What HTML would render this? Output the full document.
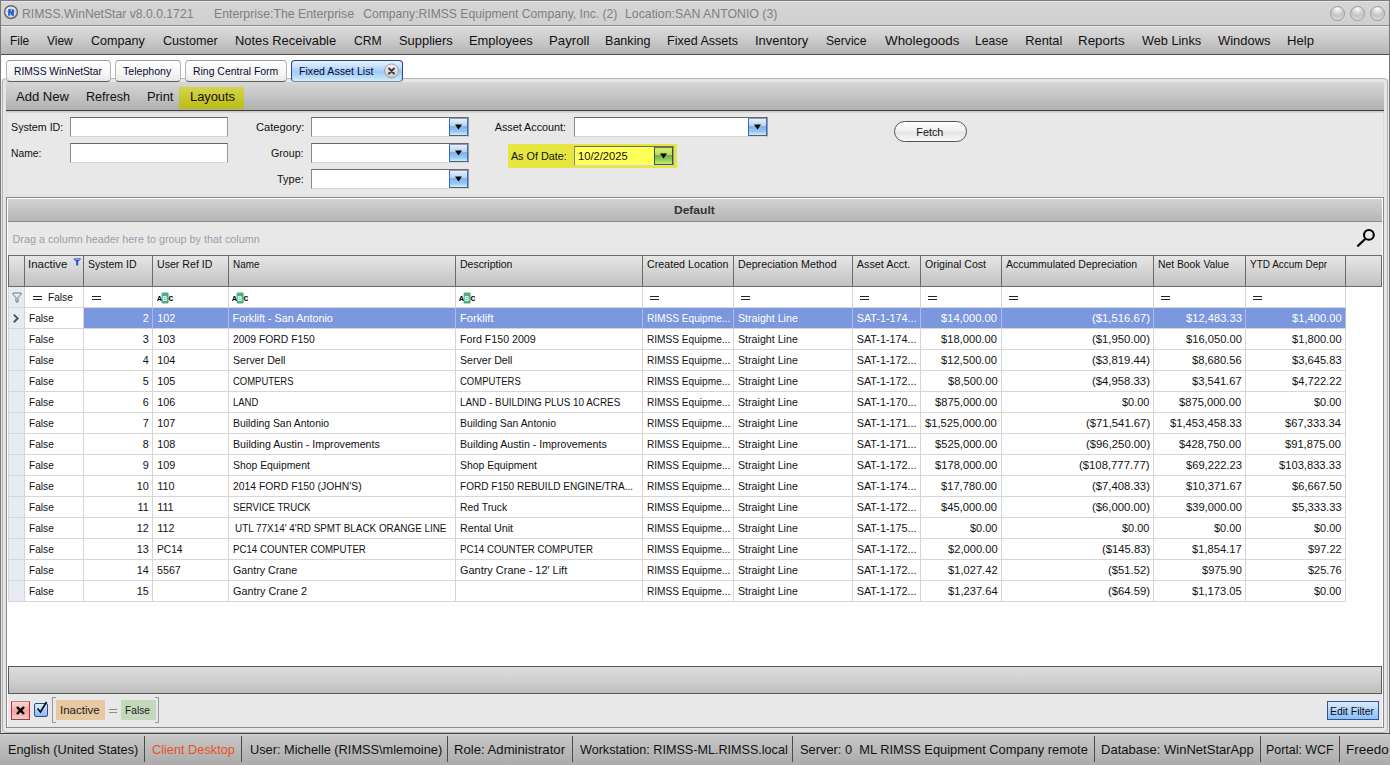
<!DOCTYPE html>
<html><head><meta charset="utf-8"><style>
html,body{margin:0;padding:0;}
body{width:1390px;height:765px;position:relative;overflow:hidden;background:#e6e6e6;font-family:"Liberation Sans", sans-serif;}
</style></head><body>
<div style="position:absolute;left:0px;top:0px;width:1390px;height:26px;background:linear-gradient(#d6d6d6,#cfcfcf);"></div>
<div style="position:absolute;left:0px;top:0px;width:1390px;height:1px;background:#7c7c7c;"></div>
<div style="position:absolute;left:1px;top:1px;width:1388px;height:1px;background:#e6e6e6;"></div>
<div style="position:absolute;left:0px;top:25px;width:1390px;height:1px;background:#8a8a8a;"></div>
<svg style="position:absolute;left:3px;top:4px" width="16" height="16" viewBox="0 0 16 16"><defs><radialGradient id="ig" cx="0.4" cy="0.35" r="0.7"><stop offset="0" stop-color="#ffffff"/><stop offset="0.7" stop-color="#e0e0e0"/><stop offset="1" stop-color="#b0b0b0"/></radialGradient></defs><circle cx="8" cy="8.1" r="6.4" fill="url(#ig)" stroke="#686868" stroke-width="1.5"/><path d="M8 2.5 L9.5 6.5 L13.5 6.8 L10.3 9.3 L11.5 13.3 L8 11 L4.5 13.3 L5.7 9.3 L2.5 6.8 L6.5 6.5 Z" fill="#8a8a8a" opacity="0.55"/><path d="M6.1 11.6 V5.2 L9.9 11.6 V5.2" stroke="#1f5fe8" stroke-width="1.9" fill="none" stroke-linejoin="bevel"/></svg>
<div class="t" style="position:absolute;top:8.00px;left:22.00px;transform-origin:0 0;font-size:12.15px;line-height:12.15px;color:#7f7f7f;white-space:nowrap;transform:scaleX(1.0043);">RIMSS.WinNetStar v8.0.0.1721</div>
<div class="t" style="position:absolute;top:8.00px;left:214.29px;transform-origin:0 0;font-size:12.15px;line-height:12.15px;color:#7f7f7f;white-space:nowrap;transform:scaleX(1.0118);">Enterprise:The Enterprise</div>
<div class="t" style="position:absolute;top:8.00px;left:363.20px;transform-origin:0 0;font-size:12.15px;line-height:12.15px;color:#7f7f7f;white-space:nowrap;">Company:RIMSS Equipment Company, Inc. (2)</div>
<div class="t" style="position:absolute;top:8.00px;left:624.99px;transform-origin:0 0;font-size:12.15px;line-height:12.15px;color:#7f7f7f;white-space:nowrap;transform:scaleX(1.0142);">Location:SAN ANTONIO (3)</div>
<div style="position:absolute;left:1330px;top:6px;width:13px;height:13px;border-radius:50%;border:1px solid #9a9a9a;background:radial-gradient(circle at 50% 15%,#ffffff 0,#e0e0e0 25%,#c4c4c4 55%,#e8e8e8 100%);box-sizing:content-box"></div>
<div style="position:absolute;left:1350px;top:6px;width:13px;height:13px;border-radius:50%;border:1px solid #9a9a9a;background:radial-gradient(circle at 50% 15%,#ffffff 0,#e0e0e0 25%,#c4c4c4 55%,#e8e8e8 100%);box-sizing:content-box"></div>
<div style="position:absolute;left:1370px;top:6px;width:13px;height:13px;border-radius:50%;border:1px solid #9a9a9a;background:radial-gradient(circle at 50% 15%,#ffffff 0,#e0e0e0 25%,#c4c4c4 55%,#e8e8e8 100%);box-sizing:content-box"></div>
<div style="position:absolute;left:0px;top:26px;width:1390px;height:29px;background:linear-gradient(#dcdcdc,#d0d0d0 35%,#b3b3b3);"></div>
<div style="position:absolute;left:0px;top:26px;width:1390px;height:1px;background:#ececec;"></div>
<div style="position:absolute;left:0px;top:54px;width:1390px;height:1px;background:#4e4e4e;"></div>
<div class="t" style="position:absolute;top:35.01px;left:10.37px;transform-origin:0 0;font-size:12.8px;line-height:12.8px;color:#111;white-space:nowrap;transform:scaleX(0.9332);">File</div>
<div class="t" style="position:absolute;top:35.01px;left:47.30px;transform-origin:0 0;font-size:12.8px;line-height:12.8px;color:#111;white-space:nowrap;transform:scaleX(0.9376);">View</div>
<div class="t" style="position:absolute;top:35.01px;left:91.20px;transform-origin:0 0;font-size:12.8px;line-height:12.8px;color:#111;white-space:nowrap;transform:scaleX(0.9825);">Company</div>
<div class="t" style="position:absolute;top:35.01px;left:163.20px;transform-origin:0 0;font-size:12.8px;line-height:12.8px;color:#111;white-space:nowrap;transform:scaleX(0.9857);">Customer</div>
<div class="t" style="position:absolute;top:35.01px;left:235.19px;transform-origin:0 0;font-size:12.8px;line-height:12.8px;color:#111;white-space:nowrap;transform:scaleX(1.0083);">Notes Receivable</div>
<div class="t" style="position:absolute;top:35.01px;left:354.40px;transform-origin:0 0;font-size:12.8px;line-height:12.8px;color:#111;white-space:nowrap;transform:scaleX(0.9514);">CRM</div>
<div class="t" style="position:absolute;top:35.01px;left:399.20px;transform-origin:0 0;font-size:12.8px;line-height:12.8px;color:#111;white-space:nowrap;transform:scaleX(1.0085);">Suppliers</div>
<div class="t" style="position:absolute;top:35.01px;left:469.19px;transform-origin:0 0;font-size:12.8px;line-height:12.8px;color:#111;white-space:nowrap;transform:scaleX(1.0080);">Employees</div>
<div class="t" style="position:absolute;top:35.01px;left:549.27px;transform-origin:0 0;font-size:12.8px;line-height:12.8px;color:#111;white-space:nowrap;transform:scaleX(1.0329);">Payroll</div>
<div class="t" style="position:absolute;top:35.01px;left:605.22px;transform-origin:0 0;font-size:12.8px;line-height:12.8px;color:#111;white-space:nowrap;transform:scaleX(0.9817);">Banking</div>
<div class="t" style="position:absolute;top:35.01px;left:667.12px;transform-origin:0 0;font-size:12.8px;line-height:12.8px;color:#111;white-space:nowrap;transform:scaleX(0.9784);">Fixed Assets</div>
<div class="t" style="position:absolute;top:35.01px;left:754.99px;transform-origin:0 0;font-size:12.8px;line-height:12.8px;color:#111;white-space:nowrap;transform:scaleX(1.0127);">Inventory</div>
<div class="t" style="position:absolute;top:35.01px;left:826.00px;transform-origin:0 0;font-size:12.8px;line-height:12.8px;color:#111;white-space:nowrap;transform:scaleX(0.9470);">Service</div>
<div class="t" style="position:absolute;top:35.01px;left:884.50px;transform-origin:0 0;font-size:12.8px;line-height:12.8px;color:#111;white-space:nowrap;transform:scaleX(1.0461);">Wholegoods</div>
<div class="t" style="position:absolute;top:35.01px;left:975.15px;transform-origin:0 0;font-size:12.8px;line-height:12.8px;color:#111;white-space:nowrap;transform:scaleX(0.9482);">Lease</div>
<div class="t" style="position:absolute;top:35.01px;left:1025.30px;transform-origin:0 0;font-size:12.8px;line-height:12.8px;color:#111;white-space:nowrap;">Rental</div>
<div class="t" style="position:absolute;top:35.01px;left:1078.16px;transform-origin:0 0;font-size:12.8px;line-height:12.8px;color:#111;white-space:nowrap;transform:scaleX(1.0436);">Reports</div>
<div class="t" style="position:absolute;top:35.01px;left:1142.10px;transform-origin:0 0;font-size:12.8px;line-height:12.8px;color:#111;white-space:nowrap;transform:scaleX(0.9930);">Web Links</div>
<div class="t" style="position:absolute;top:35.01px;left:1218.40px;transform-origin:0 0;font-size:12.8px;line-height:12.8px;color:#111;white-space:nowrap;transform:scaleX(1.0133);">Windows</div>
<div class="t" style="position:absolute;top:35.01px;left:1287.17px;transform-origin:0 0;font-size:12.8px;line-height:12.8px;color:#111;white-space:nowrap;transform:scaleX(1.0277);">Help</div>
<div style="position:absolute;left:0px;top:55px;width:1390px;height:24px;background:#ffffff;"></div>
<div style="position:absolute;left:2px;top:78px;width:1386px;height:655px;border:1px solid #b4b4b4;border-radius:4px;background:#e6e6e6;box-sizing:border-box"></div>
<div style="position:absolute;left:6px;top:60px;width:105px;height:22px;box-sizing:border-box;border-radius:4px;background:linear-gradient(#ffffff,#f6f6f6 60%,#e8e8e8);border:1px solid #b4b4b4;border-top-color:#9a9a9a;border-bottom-color:#5e5e5e;"></div>
<div class="t" style="position:absolute;top:66.00px;left:13.60px;transform-origin:0 0;font-size:10.5px;line-height:10.5px;color:#0a0a30;white-space:nowrap;transform:scaleX(0.9773);">RIMSS WinNetStar</div>
<div style="position:absolute;left:115px;top:60px;width:66px;height:22px;box-sizing:border-box;border-radius:4px;background:linear-gradient(#ffffff,#f6f6f6 60%,#e8e8e8);border:1px solid #b4b4b4;border-top-color:#9a9a9a;border-bottom-color:#5e5e5e;"></div>
<div class="t" style="position:absolute;top:66.00px;left:123.00px;transform-origin:0 0;font-size:10.5px;line-height:10.5px;color:#0a0a30;white-space:nowrap;transform:scaleX(1.0078);">Telephony</div>
<div style="position:absolute;left:185px;top:60px;width:102px;height:22px;box-sizing:border-box;border-radius:4px;background:linear-gradient(#ffffff,#f6f6f6 60%,#e8e8e8);border:1px solid #b4b4b4;border-top-color:#9a9a9a;border-bottom-color:#5e5e5e;"></div>
<div class="t" style="position:absolute;top:66.00px;left:192.50px;transform-origin:0 0;font-size:10.5px;line-height:10.5px;color:#0a0a30;white-space:nowrap;transform:scaleX(0.9939);">Ring Central Form</div>
<div style="position:absolute;left:291px;top:60px;width:112px;height:22px;box-sizing:border-box;border-radius:4px;background:linear-gradient(#e6f2fd,#c4e0fb 30%,#9ecbf6 55%,#bfe0fb 85%,#d9eefd);border:1px solid #2b3f9a;border-bottom-color:#7e8aa6;"></div>
<div class="t" style="position:absolute;top:66.00px;left:298.50px;transform-origin:0 0;font-size:10.5px;line-height:10.5px;color:#0a0a30;white-space:nowrap;transform:scaleX(1.0122);">Fixed Asset List</div>
<svg style="position:absolute;left:383px;top:63px" width="17" height="17" viewBox="0 0 17 17"><defs><linearGradient id="cg" x1="0" y1="0" x2="0" y2="1"><stop offset="0" stop-color="#f4f4f4"/><stop offset="1" stop-color="#c8c8c8"/></linearGradient></defs><circle cx="8.5" cy="8" r="7" fill="url(#cg)" stroke="#a0a0a0" stroke-width="1"/><path d="M6 5.5 L11 10.5 M11 5.5 L6 10.5" stroke="#3a3a3a" stroke-width="1.9" stroke-linecap="round"/></svg>
<div style="position:absolute;left:6px;top:82px;width:1378px;height:28px;background:linear-gradient(#d6d6d6,#c8c8c8 40%,#b0b0b0);"></div>
<div style="position:absolute;left:6px;top:110px;width:1378px;height:1px;background:#3c3c3c;"></div>
<div style="position:absolute;left:179px;top:87px;width:65px;height:22px;background:linear-gradient(#d4d44c,#c8c830 50%,#bcbc14);"></div>
<div class="t" style="position:absolute;top:91.00px;left:16.20px;transform-origin:0 0;font-size:12.75px;line-height:12.75px;color:#111;white-space:nowrap;transform:scaleX(1.0242);">Add New</div>
<div class="t" style="position:absolute;top:91.00px;left:86.41px;transform-origin:0 0;font-size:12.75px;line-height:12.75px;color:#111;white-space:nowrap;transform:scaleX(0.9873);">Refresh</div>
<div class="t" style="position:absolute;top:91.00px;left:147.09px;transform-origin:0 0;font-size:12.75px;line-height:12.75px;color:#111;white-space:nowrap;transform:scaleX(1.0088);">Print</div>
<div class="t" style="position:absolute;top:91.00px;left:189.79px;transform-origin:0 0;font-size:12.75px;line-height:12.75px;color:#111;white-space:nowrap;transform:scaleX(1.0074);">Layouts</div>
<div style="position:absolute;left:6px;top:111px;width:1378px;height:2px;background:linear-gradient(#c4c4c4,#dcdcdc);"></div>
<div style="position:absolute;left:6px;top:113px;width:1378px;height:83px;background:#e8e8e8;border:1px solid #dcdcdc;border-top:none;border-bottom-color:#e2e2e2;border-radius:0 0 3px 3px;box-sizing:border-box"></div>
<div class="t" style="position:absolute;top:122.00px;left:10.70px;transform-origin:0 0;font-size:10.8px;line-height:10.8px;color:#111;white-space:nowrap;transform:scaleX(0.9907);">System ID:</div>
<div class="t" style="position:absolute;top:148.30px;left:10.70px;transform-origin:0 0;font-size:10.8px;line-height:10.8px;color:#111;white-space:nowrap;transform:scaleX(0.9528);">Name:</div>
<div style="position:absolute;left:70px;top:117px;width:158px;height:20px;box-sizing:border-box;background:#fff;border:1px solid #9a9a9a;border-top-color:#6a6a6a;border-left-color:#8a8a8a;border-bottom-color:#d6d6d6;"></div>
<div style="position:absolute;left:70px;top:143px;width:158px;height:20px;box-sizing:border-box;background:#fff;border:1px solid #9a9a9a;border-top-color:#6a6a6a;border-left-color:#8a8a8a;border-bottom-color:#d6d6d6;"></div>
<div class="t" style="position:absolute;top:122.00px;left:255.50px;transform-origin:0 0;font-size:10.8px;line-height:10.8px;color:#111;white-space:nowrap;transform:scaleX(1.0340);">Category:</div>
<div class="t" style="position:absolute;top:148.30px;left:271.40px;transform-origin:0 0;font-size:10.8px;line-height:10.8px;color:#111;white-space:nowrap;transform:scaleX(0.9846);">Group:</div>
<div class="t" style="position:absolute;top:174.21px;left:277.10px;transform-origin:0 0;font-size:10.8px;line-height:10.8px;color:#111;white-space:nowrap;transform:scaleX(1.0149);">Type:</div>
<div style="position:absolute;left:311px;top:117px;width:158px;height:20px;box-sizing:border-box;background:#fff;border:1px solid #9a9a9a;border-top-color:#6a6a6a;border-left-color:#8a8a8a;border-bottom-color:#d6d6d6;"></div>
<div style="position:absolute;left:449px;top:118px;width:19px;height:18px;box-sizing:border-box;background:linear-gradient(#e6f0fb,#b8d2f0 42%,#7cb2ea 47%,#98c8f2 78%,#c8f0fc);border-left:1px solid #3a68c8;border-right:1px solid #3a68c8;border-top:1px solid #8a9ab8;border-bottom:1px solid #5e5e5e;"></div>
<svg style="position:absolute;left:455.0px;top:124.0px" width="7" height="6"><path d="M0 0.5 L7 0.5 L3.5 5.5 Z" fill="#000"/></svg>
<div style="position:absolute;left:311px;top:143px;width:158px;height:20px;box-sizing:border-box;background:#fff;border:1px solid #9a9a9a;border-top-color:#6a6a6a;border-left-color:#8a8a8a;border-bottom-color:#d6d6d6;"></div>
<div style="position:absolute;left:449px;top:144px;width:19px;height:18px;box-sizing:border-box;background:linear-gradient(#e6f0fb,#b8d2f0 42%,#7cb2ea 47%,#98c8f2 78%,#c8f0fc);border-left:1px solid #3a68c8;border-right:1px solid #3a68c8;border-top:1px solid #8a9ab8;border-bottom:1px solid #5e5e5e;"></div>
<svg style="position:absolute;left:455.0px;top:150.0px" width="7" height="6"><path d="M0 0.5 L7 0.5 L3.5 5.5 Z" fill="#000"/></svg>
<div style="position:absolute;left:311px;top:169px;width:158px;height:20px;box-sizing:border-box;background:#fff;border:1px solid #9a9a9a;border-top-color:#6a6a6a;border-left-color:#8a8a8a;border-bottom-color:#d6d6d6;"></div>
<div style="position:absolute;left:449px;top:170px;width:19px;height:18px;box-sizing:border-box;background:linear-gradient(#e6f0fb,#b8d2f0 42%,#7cb2ea 47%,#98c8f2 78%,#c8f0fc);border-left:1px solid #3a68c8;border-right:1px solid #3a68c8;border-top:1px solid #8a9ab8;border-bottom:1px solid #5e5e5e;"></div>
<svg style="position:absolute;left:455.0px;top:176.0px" width="7" height="6"><path d="M0 0.5 L7 0.5 L3.5 5.5 Z" fill="#000"/></svg>
<div class="t" style="position:absolute;top:122.00px;left:494.70px;transform-origin:0 0;font-size:10.8px;line-height:10.8px;color:#111;white-space:nowrap;">Asset Account:</div>
<div style="position:absolute;left:574px;top:117px;width:194px;height:20px;box-sizing:border-box;background:#fff;border:1px solid #9a9a9a;border-top-color:#6a6a6a;border-left-color:#8a8a8a;border-bottom-color:#d6d6d6;"></div>
<div style="position:absolute;left:748px;top:118px;width:19px;height:18px;box-sizing:border-box;background:linear-gradient(#e6f0fb,#b8d2f0 42%,#7cb2ea 47%,#98c8f2 78%,#c8f0fc);border-left:1px solid #3a68c8;border-right:1px solid #3a68c8;border-top:1px solid #8a9ab8;border-bottom:1px solid #5e5e5e;"></div>
<svg style="position:absolute;left:754.0px;top:124.0px" width="7" height="6"><path d="M0 0.5 L7 0.5 L3.5 5.5 Z" fill="#000"/></svg>
<div style="position:absolute;left:508px;top:144px;width:169px;height:24px;background:#e6e640;"></div>
<div class="t" style="position:absolute;top:151.00px;left:510.90px;transform-origin:0 0;font-size:10.8px;line-height:10.8px;color:#111;white-space:nowrap;">As Of Date:</div>
<div style="position:absolute;left:574px;top:146px;width:100px;height:20px;box-sizing:border-box;background:#ffff5a;border:1px solid #9a9a9a;border-top-color:#6a6a6a;border-left-color:#8a8a8a;border-bottom-color:#d6d6d6;"></div>
<div style="position:absolute;left:654px;top:147px;width:19px;height:18px;box-sizing:border-box;background:linear-gradient(#d4ea78,#bcdc5c 42%,#70ae4c 46%,#98cc5c 75%,#c4f068);border-left:1px solid #2e5a22;border-right:1px solid #2e5a22;border-top:1px solid #6a7a40;border-bottom:1px solid #5a5a20;"></div>
<svg style="position:absolute;left:660.0px;top:153.0px" width="7" height="6"><path d="M0 0.5 L7 0.5 L3.5 5.5 Z" fill="#000"/></svg>
<div class="t" style="position:absolute;top:151.00px;left:578.20px;transform-origin:0 0;font-size:10.8px;line-height:10.8px;color:#111;white-space:nowrap;transform:scaleX(1.0348);">10/2/2025</div>
<div style="position:absolute;left:894px;top:121px;width:73px;height:21px;box-sizing:border-box;border:1px solid #555;border-radius:11px;background:linear-gradient(#ffffff,#f0f0f0 45%,#e6e6e6 55%,#f8f8f8);"></div>
<div class="t" style="position:absolute;top:126.71px;left:916.30px;transform-origin:0 0;font-size:10.8px;line-height:10.8px;color:#111;white-space:nowrap;">Fetch</div>
<div style="position:absolute;left:6px;top:197px;width:1378px;height:531px;border:1px solid #8a8a8a;box-sizing:border-box;background:#e8e8e8"></div>
<div style="position:absolute;left:7px;top:198px;width:1376px;height:1px;background:#ffffff;"></div>
<div style="position:absolute;left:7px;top:198px;width:1px;height:529px;background:#ffffff;"></div>
<div style="position:absolute;left:7px;top:726px;width:1376px;height:1px;background:#ffffff;"></div>
<div style="position:absolute;left:1382px;top:198px;width:1px;height:529px;background:#ffffff;"></div>
<div style="position:absolute;left:8px;top:199px;width:1374px;height:22px;background:linear-gradient(#d2d2d2,#c4c4c4 50%,#b6b6b6);"></div>
<div style="position:absolute;left:8px;top:221px;width:1374px;height:1px;background:#8c8c8c;"></div>
<div class="t" style="position:absolute;top:205.21px;left:673.95px;transform-origin:0 0;font-size:11px;line-height:11px;color:#333;white-space:nowrap;font-weight:bold;transform:scaleX(1.0926);">Default</div>
<div style="position:absolute;left:8px;top:222px;width:1374px;height:33px;background:#e8e8e8;"></div>
<div class="t" style="position:absolute;top:233.50px;left:12.50px;transform-origin:0 0;font-size:10.8px;line-height:10.8px;color:#9c9cab;white-space:nowrap;">Drag a column header here to group by that column</div>
<svg style="position:absolute;left:1354px;top:226px" width="24" height="24" viewBox="0 0 24 24"><circle cx="14.9" cy="8.9" r="4.9" stroke="#000" stroke-width="2.1" fill="none"/><path d="M3.4 20.4 L11.2 13" stroke="#000" stroke-width="2.2" stroke-linecap="butt"/></svg>
<div style="position:absolute;left:8px;top:255px;width:1374px;height:411px;background:#ffffff;"></div>
<div style="position:absolute;left:8px;top:255px;width:1374px;height:1px;background:#6a6a6a;"></div>
<div style="position:absolute;left:8px;top:256px;width:1374px;height:30px;background:linear-gradient(#e6e6e6,#d8d8d8 40%,#c2c2c2);"></div>
<div style="position:absolute;left:8px;top:286px;width:1374px;height:1px;background:#6a6a6a;"></div>
<div style="position:absolute;left:24px;top:256px;width:1px;height:30px;background:#6a6a6a;"></div>
<div style="position:absolute;left:83px;top:256px;width:1px;height:30px;background:#6a6a6a;"></div>
<div style="position:absolute;left:152px;top:256px;width:1px;height:30px;background:#6a6a6a;"></div>
<div style="position:absolute;left:228px;top:256px;width:1px;height:30px;background:#6a6a6a;"></div>
<div style="position:absolute;left:455px;top:256px;width:1px;height:30px;background:#6a6a6a;"></div>
<div style="position:absolute;left:642px;top:256px;width:1px;height:30px;background:#6a6a6a;"></div>
<div style="position:absolute;left:733px;top:256px;width:1px;height:30px;background:#6a6a6a;"></div>
<div style="position:absolute;left:852px;top:256px;width:1px;height:30px;background:#6a6a6a;"></div>
<div style="position:absolute;left:920px;top:256px;width:1px;height:30px;background:#6a6a6a;"></div>
<div style="position:absolute;left:1001px;top:256px;width:1px;height:30px;background:#6a6a6a;"></div>
<div style="position:absolute;left:1153px;top:256px;width:1px;height:30px;background:#6a6a6a;"></div>
<div style="position:absolute;left:1245px;top:256px;width:1px;height:30px;background:#6a6a6a;"></div>
<div style="position:absolute;left:1345px;top:256px;width:1px;height:30px;background:#6a6a6a;"></div>
<div style="position:absolute;left:8px;top:255px;width:1px;height:32px;background:#6a6a6a;"></div>
<div style="position:absolute;left:1381px;top:255px;width:1px;height:32px;background:#6a6a6a;"></div>
<div class="t" style="position:absolute;top:259.00px;left:27.74px;transform-origin:0 0;font-size:10.8px;line-height:10.8px;color:#111;white-space:nowrap;transform:scaleX(1.0579);">Inactive</div>
<div class="t" style="position:absolute;top:259.00px;left:87.50px;transform-origin:0 0;font-size:10.8px;line-height:10.8px;color:#111;white-space:nowrap;transform:scaleX(0.9741);">System ID</div>
<div class="t" style="position:absolute;top:259.00px;left:156.70px;transform-origin:0 0;font-size:10.8px;line-height:10.8px;color:#111;white-space:nowrap;transform:scaleX(0.9824);">User Ref ID</div>
<div class="t" style="position:absolute;top:259.00px;left:232.70px;transform-origin:0 0;font-size:10.8px;line-height:10.8px;color:#111;white-space:nowrap;transform:scaleX(0.9168);">Name</div>
<div class="t" style="position:absolute;top:259.00px;left:459.60px;transform-origin:0 0;font-size:10.8px;line-height:10.8px;color:#111;white-space:nowrap;transform:scaleX(0.9704);">Description</div>
<div class="t" style="position:absolute;top:259.00px;left:646.70px;transform-origin:0 0;font-size:10.8px;line-height:10.8px;color:#111;white-space:nowrap;transform:scaleX(0.9912);">Created Location</div>
<div class="t" style="position:absolute;top:259.00px;left:737.50px;transform-origin:0 0;font-size:10.8px;line-height:10.8px;color:#111;white-space:nowrap;transform:scaleX(0.9907);">Depreciation Method</div>
<div class="t" style="position:absolute;top:259.00px;left:856.80px;transform-origin:0 0;font-size:10.8px;line-height:10.8px;color:#111;white-space:nowrap;">Asset Acct.</div>
<div class="t" style="position:absolute;top:259.00px;left:924.50px;transform-origin:0 0;font-size:10.8px;line-height:10.8px;color:#111;white-space:nowrap;transform:scaleX(0.9775);">Original Cost</div>
<div class="t" style="position:absolute;top:259.00px;left:1005.90px;transform-origin:0 0;font-size:10.8px;line-height:10.8px;color:#111;white-space:nowrap;transform:scaleX(0.9717);">Accummulated Depreciation</div>
<div class="t" style="position:absolute;top:259.00px;left:1157.70px;transform-origin:0 0;font-size:10.8px;line-height:10.8px;color:#111;white-space:nowrap;transform:scaleX(0.9580);">Net Book Value</div>
<div class="t" style="position:absolute;top:259.00px;left:1249.70px;transform-origin:0 0;font-size:10.8px;line-height:10.8px;color:#111;white-space:nowrap;transform:scaleX(0.9242);">YTD Accum Depr</div>
<svg style="position:absolute;left:73px;top:257px" width="9" height="10" viewBox="0 0 9 10"><path d="M0.8 1.2 L7.6 1.2 L7.6 2.6 L5.2 4.6 L5.2 8.6 L3.2 8.6 L3.2 4.6 L0.8 2.6 Z" fill="#2a4ad8"/><rect x="1.8" y="1.8" width="4.8" height="0.8" fill="#d8e0ff"/></svg>
<div style="position:absolute;left:8px;top:287px;width:16px;height:20px;background:#e6ebf4;"></div>
<div style="position:absolute;left:8px;top:307px;width:16px;height:295px;background:#e6ebf4;"></div>
<div style="position:absolute;left:8px;top:307px;width:1337px;height:1px;background:#d6d6d6;"></div>
<div style="position:absolute;left:8px;top:328px;width:1337px;height:1px;background:#d6d6d6;"></div>
<div style="position:absolute;left:8px;top:349px;width:1337px;height:1px;background:#d6d6d6;"></div>
<div style="position:absolute;left:8px;top:370px;width:1337px;height:1px;background:#d6d6d6;"></div>
<div style="position:absolute;left:8px;top:391px;width:1337px;height:1px;background:#d6d6d6;"></div>
<div style="position:absolute;left:8px;top:412px;width:1337px;height:1px;background:#d6d6d6;"></div>
<div style="position:absolute;left:8px;top:433px;width:1337px;height:1px;background:#d6d6d6;"></div>
<div style="position:absolute;left:8px;top:454px;width:1337px;height:1px;background:#d6d6d6;"></div>
<div style="position:absolute;left:8px;top:475px;width:1337px;height:1px;background:#d6d6d6;"></div>
<div style="position:absolute;left:8px;top:496px;width:1337px;height:1px;background:#d6d6d6;"></div>
<div style="position:absolute;left:8px;top:517px;width:1337px;height:1px;background:#d6d6d6;"></div>
<div style="position:absolute;left:8px;top:538px;width:1337px;height:1px;background:#d6d6d6;"></div>
<div style="position:absolute;left:8px;top:559px;width:1337px;height:1px;background:#d6d6d6;"></div>
<div style="position:absolute;left:8px;top:580px;width:1337px;height:1px;background:#d6d6d6;"></div>
<div style="position:absolute;left:8px;top:601px;width:1337px;height:1px;background:#d6d6d6;"></div>
<div style="position:absolute;left:24px;top:287px;width:1px;height:315px;background:#d6d6d6;"></div>
<div style="position:absolute;left:83px;top:287px;width:1px;height:315px;background:#d6d6d6;"></div>
<div style="position:absolute;left:152px;top:287px;width:1px;height:315px;background:#d6d6d6;"></div>
<div style="position:absolute;left:228px;top:287px;width:1px;height:315px;background:#d6d6d6;"></div>
<div style="position:absolute;left:455px;top:287px;width:1px;height:315px;background:#d6d6d6;"></div>
<div style="position:absolute;left:642px;top:287px;width:1px;height:315px;background:#d6d6d6;"></div>
<div style="position:absolute;left:733px;top:287px;width:1px;height:315px;background:#d6d6d6;"></div>
<div style="position:absolute;left:852px;top:287px;width:1px;height:315px;background:#d6d6d6;"></div>
<div style="position:absolute;left:920px;top:287px;width:1px;height:315px;background:#d6d6d6;"></div>
<div style="position:absolute;left:1001px;top:287px;width:1px;height:315px;background:#d6d6d6;"></div>
<div style="position:absolute;left:1153px;top:287px;width:1px;height:315px;background:#d6d6d6;"></div>
<div style="position:absolute;left:1245px;top:287px;width:1px;height:315px;background:#d6d6d6;"></div>
<div style="position:absolute;left:1345px;top:287px;width:1px;height:315px;background:#d6d6d6;"></div>
<div style="position:absolute;left:8px;top:287px;width:1px;height:315px;background:#d6d6d6;"></div>
<svg style="position:absolute;left:12px;top:292px" width="10" height="11" viewBox="0 0 10 11"><path d="M1 1 L9 1 L9 2.5 L6 5.5 L6 10 L4 10 L4 5.5 L1 2.5 Z" fill="none" stroke="#707070" stroke-width="1"/></svg>
<div style="position:absolute;left:33px;top:296px;width:9px;height:1px;background:#222"></div><div style="position:absolute;left:33px;top:299px;width:9px;height:1px;background:#222"></div>
<div class="t" style="position:absolute;top:292.00px;left:48.30px;transform-origin:0 0;font-size:10.8px;line-height:10.8px;color:#111;white-space:nowrap;transform:scaleX(0.9395);">False</div>
<div style="position:absolute;left:92px;top:296px;width:9px;height:1px;background:#222"></div><div style="position:absolute;left:92px;top:299px;width:9px;height:1px;background:#222"></div>
<svg style="position:absolute;left:157px;top:292px" width="17" height="12" viewBox="0 0 17 12"><rect x="4.6" y="0.5" width="7" height="11" rx="1" fill="#4caf84"/><text x="0" y="9" font-family="Liberation Mono" font-weight="bold" font-size="8" fill="#000">A</text><text x="5.3" y="9" font-family="Liberation Mono" font-weight="bold" font-size="8" fill="#e8fff0">B</text><text x="11.6" y="9" font-family="Liberation Mono" font-weight="bold" font-size="8" fill="#000">C</text></svg>
<svg style="position:absolute;left:232px;top:292px" width="17" height="12" viewBox="0 0 17 12"><rect x="4.6" y="0.5" width="7" height="11" rx="1" fill="#4caf84"/><text x="0" y="9" font-family="Liberation Mono" font-weight="bold" font-size="8" fill="#000">A</text><text x="5.3" y="9" font-family="Liberation Mono" font-weight="bold" font-size="8" fill="#e8fff0">B</text><text x="11.6" y="9" font-family="Liberation Mono" font-weight="bold" font-size="8" fill="#000">C</text></svg>
<svg style="position:absolute;left:459px;top:292px" width="17" height="12" viewBox="0 0 17 12"><rect x="4.6" y="0.5" width="7" height="11" rx="1" fill="#4caf84"/><text x="0" y="9" font-family="Liberation Mono" font-weight="bold" font-size="8" fill="#000">A</text><text x="5.3" y="9" font-family="Liberation Mono" font-weight="bold" font-size="8" fill="#e8fff0">B</text><text x="11.6" y="9" font-family="Liberation Mono" font-weight="bold" font-size="8" fill="#000">C</text></svg>
<div style="position:absolute;left:650px;top:296px;width:9px;height:1px;background:#222"></div><div style="position:absolute;left:650px;top:299px;width:9px;height:1px;background:#222"></div>
<div style="position:absolute;left:741px;top:296px;width:9px;height:1px;background:#222"></div><div style="position:absolute;left:741px;top:299px;width:9px;height:1px;background:#222"></div>
<div style="position:absolute;left:860px;top:296px;width:9px;height:1px;background:#222"></div><div style="position:absolute;left:860px;top:299px;width:9px;height:1px;background:#222"></div>
<div style="position:absolute;left:928px;top:296px;width:9px;height:1px;background:#222"></div><div style="position:absolute;left:928px;top:299px;width:9px;height:1px;background:#222"></div>
<div style="position:absolute;left:1009px;top:296px;width:9px;height:1px;background:#222"></div><div style="position:absolute;left:1009px;top:299px;width:9px;height:1px;background:#222"></div>
<div style="position:absolute;left:1161px;top:296px;width:9px;height:1px;background:#222"></div><div style="position:absolute;left:1161px;top:299px;width:9px;height:1px;background:#222"></div>
<div style="position:absolute;left:1253px;top:296px;width:9px;height:1px;background:#222"></div><div style="position:absolute;left:1253px;top:299px;width:9px;height:1px;background:#222"></div>
<div style="position:absolute;left:84px;top:308px;width:1261px;height:20px;background:#7b97dd;"></div>
<div style="position:absolute;left:152px;top:308px;width:1px;height:20px;background:#a9bbe6;"></div>
<div style="position:absolute;left:228px;top:308px;width:1px;height:20px;background:#a9bbe6;"></div>
<div style="position:absolute;left:455px;top:308px;width:1px;height:20px;background:#a9bbe6;"></div>
<div style="position:absolute;left:642px;top:308px;width:1px;height:20px;background:#a9bbe6;"></div>
<div style="position:absolute;left:733px;top:308px;width:1px;height:20px;background:#a9bbe6;"></div>
<div style="position:absolute;left:852px;top:308px;width:1px;height:20px;background:#a9bbe6;"></div>
<div style="position:absolute;left:920px;top:308px;width:1px;height:20px;background:#a9bbe6;"></div>
<div style="position:absolute;left:1001px;top:308px;width:1px;height:20px;background:#a9bbe6;"></div>
<div style="position:absolute;left:1153px;top:308px;width:1px;height:20px;background:#a9bbe6;"></div>
<div style="position:absolute;left:1245px;top:308px;width:1px;height:20px;background:#a9bbe6;"></div>
<div style="position:absolute;left:1345px;top:308px;width:1px;height:20px;background:#a9bbe6;"></div>
<svg style="position:absolute;left:12px;top:313px" width="8" height="11" viewBox="0 0 8 11"><path d="M1.8 1.6 L5.6 5.4 L1.8 9.2" stroke="#555" stroke-width="2" fill="none"/></svg>
<div class="t" style="position:absolute;top:313.00px;left:28.50px;transform-origin:0 0;font-size:10.8px;line-height:10.8px;color:#111;white-space:nowrap;transform:scaleX(0.9395);">False</div>
<div class="t" style="position:absolute;top:313.00px;left:142.80px;transform-origin:0 0;font-size:10.8px;line-height:10.8px;color:#ffffff;white-space:nowrap;">2</div>
<div class="t" style="position:absolute;top:313.00px;left:157.20px;transform-origin:0 0;font-size:10.8px;line-height:10.8px;color:#ffffff;white-space:nowrap;">102</div>
<div class="t" style="position:absolute;top:313.00px;left:232.60px;transform-origin:0 0;font-size:10.8px;line-height:10.8px;color:#ffffff;white-space:nowrap;">Forklift - San Antonio</div>
<div class="t" style="position:absolute;top:313.00px;left:459.50px;transform-origin:0 0;font-size:10.8px;line-height:10.8px;color:#ffffff;white-space:nowrap;transform:scaleX(1.0342);">Forklift</div>
<div class="t" style="position:absolute;top:313.00px;left:646.80px;transform-origin:0 0;font-size:10.8px;line-height:10.8px;color:#ffffff;white-space:nowrap;transform:scaleX(0.9369);">RIMSS Equipme...</div>
<div class="t" style="position:absolute;top:313.00px;left:737.50px;transform-origin:0 0;font-size:10.8px;line-height:10.8px;color:#ffffff;white-space:nowrap;transform:scaleX(0.9865);">Straight Line</div>
<div class="t" style="position:absolute;top:313.00px;left:856.70px;transform-origin:0 0;font-size:10.8px;line-height:10.8px;color:#ffffff;white-space:nowrap;">SAT-1-174...</div>
<div class="t" style="position:absolute;top:313.00px;left:941.26px;transform-origin:0 0;font-size:10.8px;line-height:10.8px;color:#ffffff;white-space:nowrap;transform:scaleX(1.0335);">$14,000.00</div>
<div class="t" style="position:absolute;top:313.00px;left:1092.00px;transform-origin:0 0;font-size:10.8px;line-height:10.8px;color:#ffffff;white-space:nowrap;transform:scaleX(1.0489);">($1,516.67)</div>
<div class="t" style="position:absolute;top:313.00px;left:1185.66px;transform-origin:0 0;font-size:10.8px;line-height:10.8px;color:#ffffff;white-space:nowrap;transform:scaleX(1.0335);">$12,483.33</div>
<div class="t" style="position:absolute;top:313.00px;left:1291.72px;transform-origin:0 0;font-size:10.8px;line-height:10.8px;color:#ffffff;white-space:nowrap;transform:scaleX(1.0323);">$1,400.00</div>
<div class="t" style="position:absolute;top:334.00px;left:28.50px;transform-origin:0 0;font-size:10.8px;line-height:10.8px;color:#111;white-space:nowrap;transform:scaleX(0.9395);">False</div>
<div class="t" style="position:absolute;top:334.00px;left:142.80px;transform-origin:0 0;font-size:10.8px;line-height:10.8px;color:#111;white-space:nowrap;">3</div>
<div class="t" style="position:absolute;top:334.00px;left:157.20px;transform-origin:0 0;font-size:10.8px;line-height:10.8px;color:#111;white-space:nowrap;">103</div>
<div class="t" style="position:absolute;top:334.00px;left:232.60px;transform-origin:0 0;font-size:10.8px;line-height:10.8px;color:#111;white-space:nowrap;transform:scaleX(0.9600);">2009 FORD F150</div>
<div class="t" style="position:absolute;top:334.00px;left:459.50px;transform-origin:0 0;font-size:10.8px;line-height:10.8px;color:#111;white-space:nowrap;transform:scaleX(0.9854);">Ford F150 2009</div>
<div class="t" style="position:absolute;top:334.00px;left:646.80px;transform-origin:0 0;font-size:10.8px;line-height:10.8px;color:#111;white-space:nowrap;transform:scaleX(0.9369);">RIMSS Equipme...</div>
<div class="t" style="position:absolute;top:334.00px;left:737.50px;transform-origin:0 0;font-size:10.8px;line-height:10.8px;color:#111;white-space:nowrap;transform:scaleX(0.9865);">Straight Line</div>
<div class="t" style="position:absolute;top:334.00px;left:856.70px;transform-origin:0 0;font-size:10.8px;line-height:10.8px;color:#111;white-space:nowrap;">SAT-1-174...</div>
<div class="t" style="position:absolute;top:334.00px;left:941.26px;transform-origin:0 0;font-size:10.8px;line-height:10.8px;color:#111;white-space:nowrap;transform:scaleX(1.0335);">$18,000.00</div>
<div class="t" style="position:absolute;top:334.00px;left:1092.00px;transform-origin:0 0;font-size:10.8px;line-height:10.8px;color:#111;white-space:nowrap;transform:scaleX(1.0489);">($1,950.00)</div>
<div class="t" style="position:absolute;top:334.00px;left:1185.66px;transform-origin:0 0;font-size:10.8px;line-height:10.8px;color:#111;white-space:nowrap;transform:scaleX(1.0335);">$16,050.00</div>
<div class="t" style="position:absolute;top:334.00px;left:1291.72px;transform-origin:0 0;font-size:10.8px;line-height:10.8px;color:#111;white-space:nowrap;transform:scaleX(1.0323);">$1,800.00</div>
<div class="t" style="position:absolute;top:355.00px;left:28.50px;transform-origin:0 0;font-size:10.8px;line-height:10.8px;color:#111;white-space:nowrap;transform:scaleX(0.9395);">False</div>
<div class="t" style="position:absolute;top:355.00px;left:142.80px;transform-origin:0 0;font-size:10.8px;line-height:10.8px;color:#111;white-space:nowrap;">4</div>
<div class="t" style="position:absolute;top:355.00px;left:157.20px;transform-origin:0 0;font-size:10.8px;line-height:10.8px;color:#111;white-space:nowrap;">104</div>
<div class="t" style="position:absolute;top:355.00px;left:232.60px;transform-origin:0 0;font-size:10.8px;line-height:10.8px;color:#111;white-space:nowrap;transform:scaleX(0.9811);">Server Dell</div>
<div class="t" style="position:absolute;top:355.00px;left:459.50px;transform-origin:0 0;font-size:10.8px;line-height:10.8px;color:#111;white-space:nowrap;transform:scaleX(0.9811);">Server Dell</div>
<div class="t" style="position:absolute;top:355.00px;left:646.80px;transform-origin:0 0;font-size:10.8px;line-height:10.8px;color:#111;white-space:nowrap;transform:scaleX(0.9369);">RIMSS Equipme...</div>
<div class="t" style="position:absolute;top:355.00px;left:737.50px;transform-origin:0 0;font-size:10.8px;line-height:10.8px;color:#111;white-space:nowrap;transform:scaleX(0.9865);">Straight Line</div>
<div class="t" style="position:absolute;top:355.00px;left:856.70px;transform-origin:0 0;font-size:10.8px;line-height:10.8px;color:#111;white-space:nowrap;">SAT-1-172...</div>
<div class="t" style="position:absolute;top:355.00px;left:941.26px;transform-origin:0 0;font-size:10.8px;line-height:10.8px;color:#111;white-space:nowrap;transform:scaleX(1.0335);">$12,500.00</div>
<div class="t" style="position:absolute;top:355.00px;left:1092.00px;transform-origin:0 0;font-size:10.8px;line-height:10.8px;color:#111;white-space:nowrap;transform:scaleX(1.0489);">($3,819.44)</div>
<div class="t" style="position:absolute;top:355.00px;left:1191.92px;transform-origin:0 0;font-size:10.8px;line-height:10.8px;color:#111;white-space:nowrap;transform:scaleX(1.0323);">$8,680.56</div>
<div class="t" style="position:absolute;top:355.00px;left:1291.72px;transform-origin:0 0;font-size:10.8px;line-height:10.8px;color:#111;white-space:nowrap;transform:scaleX(1.0323);">$3,645.83</div>
<div class="t" style="position:absolute;top:376.00px;left:28.50px;transform-origin:0 0;font-size:10.8px;line-height:10.8px;color:#111;white-space:nowrap;transform:scaleX(0.9395);">False</div>
<div class="t" style="position:absolute;top:376.00px;left:142.80px;transform-origin:0 0;font-size:10.8px;line-height:10.8px;color:#111;white-space:nowrap;">5</div>
<div class="t" style="position:absolute;top:376.00px;left:157.20px;transform-origin:0 0;font-size:10.8px;line-height:10.8px;color:#111;white-space:nowrap;">105</div>
<div class="t" style="position:absolute;top:376.00px;left:232.60px;transform-origin:0 0;font-size:10.8px;line-height:10.8px;color:#111;white-space:nowrap;transform:scaleX(0.8767);">COMPUTERS</div>
<div class="t" style="position:absolute;top:376.00px;left:459.50px;transform-origin:0 0;font-size:10.8px;line-height:10.8px;color:#111;white-space:nowrap;transform:scaleX(0.8810);">COMPUTERS</div>
<div class="t" style="position:absolute;top:376.00px;left:646.80px;transform-origin:0 0;font-size:10.8px;line-height:10.8px;color:#111;white-space:nowrap;transform:scaleX(0.9369);">RIMSS Equipme...</div>
<div class="t" style="position:absolute;top:376.00px;left:737.50px;transform-origin:0 0;font-size:10.8px;line-height:10.8px;color:#111;white-space:nowrap;transform:scaleX(0.9865);">Straight Line</div>
<div class="t" style="position:absolute;top:376.00px;left:856.70px;transform-origin:0 0;font-size:10.8px;line-height:10.8px;color:#111;white-space:nowrap;">SAT-1-172...</div>
<div class="t" style="position:absolute;top:376.00px;left:947.52px;transform-origin:0 0;font-size:10.8px;line-height:10.8px;color:#111;white-space:nowrap;transform:scaleX(1.0323);">$8,500.00</div>
<div class="t" style="position:absolute;top:376.00px;left:1092.00px;transform-origin:0 0;font-size:10.8px;line-height:10.8px;color:#111;white-space:nowrap;transform:scaleX(1.0489);">($4,958.33)</div>
<div class="t" style="position:absolute;top:376.00px;left:1191.92px;transform-origin:0 0;font-size:10.8px;line-height:10.8px;color:#111;white-space:nowrap;transform:scaleX(1.0323);">$3,541.67</div>
<div class="t" style="position:absolute;top:376.00px;left:1291.72px;transform-origin:0 0;font-size:10.8px;line-height:10.8px;color:#111;white-space:nowrap;transform:scaleX(1.0323);">$4,722.22</div>
<div class="t" style="position:absolute;top:397.00px;left:28.50px;transform-origin:0 0;font-size:10.8px;line-height:10.8px;color:#111;white-space:nowrap;transform:scaleX(0.9395);">False</div>
<div class="t" style="position:absolute;top:397.00px;left:142.80px;transform-origin:0 0;font-size:10.8px;line-height:10.8px;color:#111;white-space:nowrap;">6</div>
<div class="t" style="position:absolute;top:397.00px;left:157.20px;transform-origin:0 0;font-size:10.8px;line-height:10.8px;color:#111;white-space:nowrap;">106</div>
<div class="t" style="position:absolute;top:397.00px;left:232.60px;transform-origin:0 0;font-size:10.8px;line-height:10.8px;color:#111;white-space:nowrap;transform:scaleX(0.8792);">LAND</div>
<div class="t" style="position:absolute;top:397.00px;left:459.50px;transform-origin:0 0;font-size:10.8px;line-height:10.8px;color:#111;white-space:nowrap;transform:scaleX(0.9146);">LAND - BUILDING PLUS 10 ACRES</div>
<div class="t" style="position:absolute;top:397.00px;left:646.80px;transform-origin:0 0;font-size:10.8px;line-height:10.8px;color:#111;white-space:nowrap;transform:scaleX(0.9369);">RIMSS Equipme...</div>
<div class="t" style="position:absolute;top:397.00px;left:737.50px;transform-origin:0 0;font-size:10.8px;line-height:10.8px;color:#111;white-space:nowrap;transform:scaleX(0.9865);">Straight Line</div>
<div class="t" style="position:absolute;top:397.00px;left:856.70px;transform-origin:0 0;font-size:10.8px;line-height:10.8px;color:#111;white-space:nowrap;">SAT-1-170...</div>
<div class="t" style="position:absolute;top:397.00px;left:935.00px;transform-origin:0 0;font-size:10.8px;line-height:10.8px;color:#111;white-space:nowrap;transform:scaleX(1.0344);">$875,000.00</div>
<div class="t" style="position:absolute;top:397.00px;left:1121.93px;transform-origin:0 0;font-size:10.8px;line-height:10.8px;color:#111;white-space:nowrap;transform:scaleX(1.0132);">$0.00</div>
<div class="t" style="position:absolute;top:397.00px;left:1179.40px;transform-origin:0 0;font-size:10.8px;line-height:10.8px;color:#111;white-space:nowrap;transform:scaleX(1.0344);">$875,000.00</div>
<div class="t" style="position:absolute;top:397.00px;left:1313.93px;transform-origin:0 0;font-size:10.8px;line-height:10.8px;color:#111;white-space:nowrap;transform:scaleX(1.0132);">$0.00</div>
<div class="t" style="position:absolute;top:418.00px;left:28.50px;transform-origin:0 0;font-size:10.8px;line-height:10.8px;color:#111;white-space:nowrap;transform:scaleX(0.9395);">False</div>
<div class="t" style="position:absolute;top:418.00px;left:142.80px;transform-origin:0 0;font-size:10.8px;line-height:10.8px;color:#111;white-space:nowrap;">7</div>
<div class="t" style="position:absolute;top:418.00px;left:157.20px;transform-origin:0 0;font-size:10.8px;line-height:10.8px;color:#111;white-space:nowrap;">107</div>
<div class="t" style="position:absolute;top:418.00px;left:232.60px;transform-origin:0 0;font-size:10.8px;line-height:10.8px;color:#111;white-space:nowrap;transform:scaleX(0.9637);">Building San Antonio</div>
<div class="t" style="position:absolute;top:418.00px;left:459.50px;transform-origin:0 0;font-size:10.8px;line-height:10.8px;color:#111;white-space:nowrap;transform:scaleX(0.9627);">Building San Antonio</div>
<div class="t" style="position:absolute;top:418.00px;left:646.80px;transform-origin:0 0;font-size:10.8px;line-height:10.8px;color:#111;white-space:nowrap;transform:scaleX(0.9369);">RIMSS Equipme...</div>
<div class="t" style="position:absolute;top:418.00px;left:737.50px;transform-origin:0 0;font-size:10.8px;line-height:10.8px;color:#111;white-space:nowrap;transform:scaleX(0.9865);">Straight Line</div>
<div class="t" style="position:absolute;top:418.00px;left:856.70px;transform-origin:0 0;font-size:10.8px;line-height:10.8px;color:#111;white-space:nowrap;">SAT-1-171...</div>
<div class="t" style="position:absolute;top:418.00px;left:925.31px;transform-origin:0 0;font-size:10.8px;line-height:10.8px;color:#111;white-space:nowrap;transform:scaleX(1.0398);">$1,525,000.00</div>
<div class="t" style="position:absolute;top:418.00px;left:1085.74px;transform-origin:0 0;font-size:10.8px;line-height:10.8px;color:#111;white-space:nowrap;transform:scaleX(1.0483);">($71,541.67)</div>
<div class="t" style="position:absolute;top:418.00px;left:1169.71px;transform-origin:0 0;font-size:10.8px;line-height:10.8px;color:#111;white-space:nowrap;transform:scaleX(1.0398);">$1,453,458.33</div>
<div class="t" style="position:absolute;top:418.00px;left:1285.46px;transform-origin:0 0;font-size:10.8px;line-height:10.8px;color:#111;white-space:nowrap;transform:scaleX(1.0335);">$67,333.34</div>
<div class="t" style="position:absolute;top:439.00px;left:28.50px;transform-origin:0 0;font-size:10.8px;line-height:10.8px;color:#111;white-space:nowrap;transform:scaleX(0.9395);">False</div>
<div class="t" style="position:absolute;top:439.00px;left:142.80px;transform-origin:0 0;font-size:10.8px;line-height:10.8px;color:#111;white-space:nowrap;">8</div>
<div class="t" style="position:absolute;top:439.00px;left:157.20px;transform-origin:0 0;font-size:10.8px;line-height:10.8px;color:#111;white-space:nowrap;">108</div>
<div class="t" style="position:absolute;top:439.00px;left:232.60px;transform-origin:0 0;font-size:10.8px;line-height:10.8px;color:#111;white-space:nowrap;transform:scaleX(0.9865);">Building Austin - Improvements</div>
<div class="t" style="position:absolute;top:439.00px;left:459.50px;transform-origin:0 0;font-size:10.8px;line-height:10.8px;color:#111;white-space:nowrap;transform:scaleX(0.9858);">Building Austin - Improvements</div>
<div class="t" style="position:absolute;top:439.00px;left:646.80px;transform-origin:0 0;font-size:10.8px;line-height:10.8px;color:#111;white-space:nowrap;transform:scaleX(0.9369);">RIMSS Equipme...</div>
<div class="t" style="position:absolute;top:439.00px;left:737.50px;transform-origin:0 0;font-size:10.8px;line-height:10.8px;color:#111;white-space:nowrap;transform:scaleX(0.9865);">Straight Line</div>
<div class="t" style="position:absolute;top:439.00px;left:856.70px;transform-origin:0 0;font-size:10.8px;line-height:10.8px;color:#111;white-space:nowrap;">SAT-1-171...</div>
<div class="t" style="position:absolute;top:439.00px;left:935.00px;transform-origin:0 0;font-size:10.8px;line-height:10.8px;color:#111;white-space:nowrap;transform:scaleX(1.0344);">$525,000.00</div>
<div class="t" style="position:absolute;top:439.00px;left:1085.74px;transform-origin:0 0;font-size:10.8px;line-height:10.8px;color:#111;white-space:nowrap;transform:scaleX(1.0483);">($96,250.00)</div>
<div class="t" style="position:absolute;top:439.00px;left:1179.40px;transform-origin:0 0;font-size:10.8px;line-height:10.8px;color:#111;white-space:nowrap;transform:scaleX(1.0344);">$428,750.00</div>
<div class="t" style="position:absolute;top:439.00px;left:1285.46px;transform-origin:0 0;font-size:10.8px;line-height:10.8px;color:#111;white-space:nowrap;transform:scaleX(1.0335);">$91,875.00</div>
<div class="t" style="position:absolute;top:460.00px;left:28.50px;transform-origin:0 0;font-size:10.8px;line-height:10.8px;color:#111;white-space:nowrap;transform:scaleX(0.9395);">False</div>
<div class="t" style="position:absolute;top:460.00px;left:142.80px;transform-origin:0 0;font-size:10.8px;line-height:10.8px;color:#111;white-space:nowrap;">9</div>
<div class="t" style="position:absolute;top:460.00px;left:157.20px;transform-origin:0 0;font-size:10.8px;line-height:10.8px;color:#111;white-space:nowrap;">109</div>
<div class="t" style="position:absolute;top:460.00px;left:232.60px;transform-origin:0 0;font-size:10.8px;line-height:10.8px;color:#111;white-space:nowrap;transform:scaleX(0.9620);">Shop Equipment</div>
<div class="t" style="position:absolute;top:460.00px;left:459.50px;transform-origin:0 0;font-size:10.8px;line-height:10.8px;color:#111;white-space:nowrap;transform:scaleX(0.9620);">Shop Equipment</div>
<div class="t" style="position:absolute;top:460.00px;left:646.80px;transform-origin:0 0;font-size:10.8px;line-height:10.8px;color:#111;white-space:nowrap;transform:scaleX(0.9369);">RIMSS Equipme...</div>
<div class="t" style="position:absolute;top:460.00px;left:737.50px;transform-origin:0 0;font-size:10.8px;line-height:10.8px;color:#111;white-space:nowrap;transform:scaleX(0.9865);">Straight Line</div>
<div class="t" style="position:absolute;top:460.00px;left:856.70px;transform-origin:0 0;font-size:10.8px;line-height:10.8px;color:#111;white-space:nowrap;">SAT-1-172...</div>
<div class="t" style="position:absolute;top:460.00px;left:935.00px;transform-origin:0 0;font-size:10.8px;line-height:10.8px;color:#111;white-space:nowrap;transform:scaleX(1.0344);">$178,000.00</div>
<div class="t" style="position:absolute;top:460.00px;left:1079.48px;transform-origin:0 0;font-size:10.8px;line-height:10.8px;color:#111;white-space:nowrap;transform:scaleX(1.0478);">($108,777.77)</div>
<div class="t" style="position:absolute;top:460.00px;left:1185.66px;transform-origin:0 0;font-size:10.8px;line-height:10.8px;color:#111;white-space:nowrap;transform:scaleX(1.0335);">$69,222.23</div>
<div class="t" style="position:absolute;top:460.00px;left:1279.20px;transform-origin:0 0;font-size:10.8px;line-height:10.8px;color:#111;white-space:nowrap;transform:scaleX(1.0344);">$103,833.33</div>
<div class="t" style="position:absolute;top:481.00px;left:28.50px;transform-origin:0 0;font-size:10.8px;line-height:10.8px;color:#111;white-space:nowrap;transform:scaleX(0.9395);">False</div>
<div class="t" style="position:absolute;top:481.00px;left:136.80px;transform-origin:0 0;font-size:10.8px;line-height:10.8px;color:#111;white-space:nowrap;">10</div>
<div class="t" style="position:absolute;top:481.00px;left:157.20px;transform-origin:0 0;font-size:10.8px;line-height:10.8px;color:#111;white-space:nowrap;">110</div>
<div class="t" style="position:absolute;top:481.00px;left:232.60px;transform-origin:0 0;font-size:10.8px;line-height:10.8px;color:#111;white-space:nowrap;transform:scaleX(0.9591);">2014 FORD F150 (JOHN'S)</div>
<div class="t" style="position:absolute;top:481.00px;left:459.50px;transform-origin:0 0;font-size:10.8px;line-height:10.8px;color:#111;white-space:nowrap;transform:scaleX(0.9307);">FORD F150 REBUILD ENGINE/TRA...</div>
<div class="t" style="position:absolute;top:481.00px;left:646.80px;transform-origin:0 0;font-size:10.8px;line-height:10.8px;color:#111;white-space:nowrap;transform:scaleX(0.9369);">RIMSS Equipme...</div>
<div class="t" style="position:absolute;top:481.00px;left:737.50px;transform-origin:0 0;font-size:10.8px;line-height:10.8px;color:#111;white-space:nowrap;transform:scaleX(0.9865);">Straight Line</div>
<div class="t" style="position:absolute;top:481.00px;left:856.70px;transform-origin:0 0;font-size:10.8px;line-height:10.8px;color:#111;white-space:nowrap;">SAT-1-174...</div>
<div class="t" style="position:absolute;top:481.00px;left:941.26px;transform-origin:0 0;font-size:10.8px;line-height:10.8px;color:#111;white-space:nowrap;transform:scaleX(1.0335);">$17,780.00</div>
<div class="t" style="position:absolute;top:481.00px;left:1092.00px;transform-origin:0 0;font-size:10.8px;line-height:10.8px;color:#111;white-space:nowrap;transform:scaleX(1.0489);">($7,408.33)</div>
<div class="t" style="position:absolute;top:481.00px;left:1185.66px;transform-origin:0 0;font-size:10.8px;line-height:10.8px;color:#111;white-space:nowrap;transform:scaleX(1.0335);">$10,371.67</div>
<div class="t" style="position:absolute;top:481.00px;left:1291.72px;transform-origin:0 0;font-size:10.8px;line-height:10.8px;color:#111;white-space:nowrap;transform:scaleX(1.0323);">$6,667.50</div>
<div class="t" style="position:absolute;top:502.00px;left:28.50px;transform-origin:0 0;font-size:10.8px;line-height:10.8px;color:#111;white-space:nowrap;transform:scaleX(0.9395);">False</div>
<div class="t" style="position:absolute;top:502.00px;left:137.60px;transform-origin:0 0;font-size:10.8px;line-height:10.8px;color:#111;white-space:nowrap;">11</div>
<div class="t" style="position:absolute;top:502.00px;left:157.20px;transform-origin:0 0;font-size:10.8px;line-height:10.8px;color:#111;white-space:nowrap;">111</div>
<div class="t" style="position:absolute;top:502.00px;left:232.60px;transform-origin:0 0;font-size:10.8px;line-height:10.8px;color:#111;white-space:nowrap;transform:scaleX(0.8890);">SERVICE TRUCK</div>
<div class="t" style="position:absolute;top:502.00px;left:459.50px;transform-origin:0 0;font-size:10.8px;line-height:10.8px;color:#111;white-space:nowrap;transform:scaleX(0.9600);">Red Truck</div>
<div class="t" style="position:absolute;top:502.00px;left:646.80px;transform-origin:0 0;font-size:10.8px;line-height:10.8px;color:#111;white-space:nowrap;transform:scaleX(0.9369);">RIMSS Equipme...</div>
<div class="t" style="position:absolute;top:502.00px;left:737.50px;transform-origin:0 0;font-size:10.8px;line-height:10.8px;color:#111;white-space:nowrap;transform:scaleX(0.9865);">Straight Line</div>
<div class="t" style="position:absolute;top:502.00px;left:856.70px;transform-origin:0 0;font-size:10.8px;line-height:10.8px;color:#111;white-space:nowrap;">SAT-1-172...</div>
<div class="t" style="position:absolute;top:502.00px;left:941.26px;transform-origin:0 0;font-size:10.8px;line-height:10.8px;color:#111;white-space:nowrap;transform:scaleX(1.0335);">$45,000.00</div>
<div class="t" style="position:absolute;top:502.00px;left:1092.00px;transform-origin:0 0;font-size:10.8px;line-height:10.8px;color:#111;white-space:nowrap;transform:scaleX(1.0489);">($6,000.00)</div>
<div class="t" style="position:absolute;top:502.00px;left:1185.66px;transform-origin:0 0;font-size:10.8px;line-height:10.8px;color:#111;white-space:nowrap;transform:scaleX(1.0335);">$39,000.00</div>
<div class="t" style="position:absolute;top:502.00px;left:1291.72px;transform-origin:0 0;font-size:10.8px;line-height:10.8px;color:#111;white-space:nowrap;transform:scaleX(1.0323);">$5,333.33</div>
<div class="t" style="position:absolute;top:523.00px;left:28.50px;transform-origin:0 0;font-size:10.8px;line-height:10.8px;color:#111;white-space:nowrap;transform:scaleX(0.9395);">False</div>
<div class="t" style="position:absolute;top:523.00px;left:136.80px;transform-origin:0 0;font-size:10.8px;line-height:10.8px;color:#111;white-space:nowrap;">12</div>
<div class="t" style="position:absolute;top:523.00px;left:157.20px;transform-origin:0 0;font-size:10.8px;line-height:10.8px;color:#111;white-space:nowrap;">112</div>
<div class="t" style="position:absolute;top:523.00px;left:235.00px;transform-origin:0 0;font-size:10.8px;line-height:10.8px;color:#111;white-space:nowrap;transform:scaleX(0.9156);">UTL 77X14' 4'RD SPMT BLACK ORANGE LINE</div>
<div class="t" style="position:absolute;top:523.00px;left:459.50px;transform-origin:0 0;font-size:10.8px;line-height:10.8px;color:#111;white-space:nowrap;transform:scaleX(0.9942);">Rental Unit</div>
<div class="t" style="position:absolute;top:523.00px;left:646.80px;transform-origin:0 0;font-size:10.8px;line-height:10.8px;color:#111;white-space:nowrap;transform:scaleX(0.9369);">RIMSS Equipme...</div>
<div class="t" style="position:absolute;top:523.00px;left:737.50px;transform-origin:0 0;font-size:10.8px;line-height:10.8px;color:#111;white-space:nowrap;transform:scaleX(0.9865);">Straight Line</div>
<div class="t" style="position:absolute;top:523.00px;left:856.70px;transform-origin:0 0;font-size:10.8px;line-height:10.8px;color:#111;white-space:nowrap;">SAT-1-175...</div>
<div class="t" style="position:absolute;top:523.00px;left:969.73px;transform-origin:0 0;font-size:10.8px;line-height:10.8px;color:#111;white-space:nowrap;transform:scaleX(1.0132);">$0.00</div>
<div class="t" style="position:absolute;top:523.00px;left:1121.93px;transform-origin:0 0;font-size:10.8px;line-height:10.8px;color:#111;white-space:nowrap;transform:scaleX(1.0132);">$0.00</div>
<div class="t" style="position:absolute;top:523.00px;left:1214.13px;transform-origin:0 0;font-size:10.8px;line-height:10.8px;color:#111;white-space:nowrap;transform:scaleX(1.0132);">$0.00</div>
<div class="t" style="position:absolute;top:523.00px;left:1313.93px;transform-origin:0 0;font-size:10.8px;line-height:10.8px;color:#111;white-space:nowrap;transform:scaleX(1.0132);">$0.00</div>
<div class="t" style="position:absolute;top:544.00px;left:28.50px;transform-origin:0 0;font-size:10.8px;line-height:10.8px;color:#111;white-space:nowrap;transform:scaleX(0.9395);">False</div>
<div class="t" style="position:absolute;top:544.00px;left:136.80px;transform-origin:0 0;font-size:10.8px;line-height:10.8px;color:#111;white-space:nowrap;">13</div>
<div class="t" style="position:absolute;top:544.00px;left:157.20px;transform-origin:0 0;font-size:10.8px;line-height:10.8px;color:#111;white-space:nowrap;transform:scaleX(0.9443);">PC14</div>
<div class="t" style="position:absolute;top:544.00px;left:232.60px;transform-origin:0 0;font-size:10.8px;line-height:10.8px;color:#111;white-space:nowrap;transform:scaleX(0.8964);">PC14 COUNTER COMPUTER</div>
<div class="t" style="position:absolute;top:544.00px;left:459.50px;transform-origin:0 0;font-size:10.8px;line-height:10.8px;color:#111;white-space:nowrap;transform:scaleX(0.8977);">PC14 COUNTER COMPUTER</div>
<div class="t" style="position:absolute;top:544.00px;left:646.80px;transform-origin:0 0;font-size:10.8px;line-height:10.8px;color:#111;white-space:nowrap;transform:scaleX(0.9369);">RIMSS Equipme...</div>
<div class="t" style="position:absolute;top:544.00px;left:737.50px;transform-origin:0 0;font-size:10.8px;line-height:10.8px;color:#111;white-space:nowrap;transform:scaleX(0.9865);">Straight Line</div>
<div class="t" style="position:absolute;top:544.00px;left:856.70px;transform-origin:0 0;font-size:10.8px;line-height:10.8px;color:#111;white-space:nowrap;">SAT-1-172...</div>
<div class="t" style="position:absolute;top:544.00px;left:947.52px;transform-origin:0 0;font-size:10.8px;line-height:10.8px;color:#111;white-space:nowrap;transform:scaleX(1.0323);">$2,000.00</div>
<div class="t" style="position:absolute;top:544.00px;left:1101.69px;transform-origin:0 0;font-size:10.8px;line-height:10.8px;color:#111;white-space:nowrap;transform:scaleX(1.0435);">($145.83)</div>
<div class="t" style="position:absolute;top:544.00px;left:1191.92px;transform-origin:0 0;font-size:10.8px;line-height:10.8px;color:#111;white-space:nowrap;transform:scaleX(1.0323);">$1,854.17</div>
<div class="t" style="position:absolute;top:544.00px;left:1307.67px;transform-origin:0 0;font-size:10.8px;line-height:10.8px;color:#111;white-space:nowrap;transform:scaleX(1.0185);">$97.22</div>
<div class="t" style="position:absolute;top:565.00px;left:28.50px;transform-origin:0 0;font-size:10.8px;line-height:10.8px;color:#111;white-space:nowrap;transform:scaleX(0.9395);">False</div>
<div class="t" style="position:absolute;top:565.00px;left:136.80px;transform-origin:0 0;font-size:10.8px;line-height:10.8px;color:#111;white-space:nowrap;">14</div>
<div class="t" style="position:absolute;top:565.00px;left:157.20px;transform-origin:0 0;font-size:10.8px;line-height:10.8px;color:#111;white-space:nowrap;transform:scaleX(0.9911);">5567</div>
<div class="t" style="position:absolute;top:565.00px;left:232.60px;transform-origin:0 0;font-size:10.8px;line-height:10.8px;color:#111;white-space:nowrap;transform:scaleX(0.9907);">Gantry Crane</div>
<div class="t" style="position:absolute;top:565.00px;left:459.50px;transform-origin:0 0;font-size:10.8px;line-height:10.8px;color:#111;white-space:nowrap;transform:scaleX(1.0125);">Gantry Crane - 12' Lift</div>
<div class="t" style="position:absolute;top:565.00px;left:646.80px;transform-origin:0 0;font-size:10.8px;line-height:10.8px;color:#111;white-space:nowrap;transform:scaleX(0.9369);">RIMSS Equipme...</div>
<div class="t" style="position:absolute;top:565.00px;left:737.50px;transform-origin:0 0;font-size:10.8px;line-height:10.8px;color:#111;white-space:nowrap;transform:scaleX(0.9865);">Straight Line</div>
<div class="t" style="position:absolute;top:565.00px;left:856.70px;transform-origin:0 0;font-size:10.8px;line-height:10.8px;color:#111;white-space:nowrap;">SAT-1-172...</div>
<div class="t" style="position:absolute;top:565.00px;left:947.52px;transform-origin:0 0;font-size:10.8px;line-height:10.8px;color:#111;white-space:nowrap;transform:scaleX(1.0323);">$1,027.42</div>
<div class="t" style="position:absolute;top:565.00px;left:1107.95px;transform-origin:0 0;font-size:10.8px;line-height:10.8px;color:#111;white-space:nowrap;transform:scaleX(1.0437);">($51.52)</div>
<div class="t" style="position:absolute;top:565.00px;left:1201.61px;transform-origin:0 0;font-size:10.8px;line-height:10.8px;color:#111;white-space:nowrap;transform:scaleX(1.0222);">$975.90</div>
<div class="t" style="position:absolute;top:565.00px;left:1307.67px;transform-origin:0 0;font-size:10.8px;line-height:10.8px;color:#111;white-space:nowrap;transform:scaleX(1.0185);">$25.76</div>
<div class="t" style="position:absolute;top:586.00px;left:28.50px;transform-origin:0 0;font-size:10.8px;line-height:10.8px;color:#111;white-space:nowrap;transform:scaleX(0.9395);">False</div>
<div class="t" style="position:absolute;top:586.00px;left:136.80px;transform-origin:0 0;font-size:10.8px;line-height:10.8px;color:#111;white-space:nowrap;">15</div>
<div class="t" style="position:absolute;top:586.00px;left:232.60px;transform-origin:0 0;font-size:10.8px;line-height:10.8px;color:#111;white-space:nowrap;transform:scaleX(1.0040);">Gantry Crane 2</div>
<div class="t" style="position:absolute;top:586.00px;left:646.80px;transform-origin:0 0;font-size:10.8px;line-height:10.8px;color:#111;white-space:nowrap;transform:scaleX(0.9369);">RIMSS Equipme...</div>
<div class="t" style="position:absolute;top:586.00px;left:737.50px;transform-origin:0 0;font-size:10.8px;line-height:10.8px;color:#111;white-space:nowrap;transform:scaleX(0.9865);">Straight Line</div>
<div class="t" style="position:absolute;top:586.00px;left:856.70px;transform-origin:0 0;font-size:10.8px;line-height:10.8px;color:#111;white-space:nowrap;">SAT-1-172...</div>
<div class="t" style="position:absolute;top:586.00px;left:947.52px;transform-origin:0 0;font-size:10.8px;line-height:10.8px;color:#111;white-space:nowrap;transform:scaleX(1.0323);">$1,237.64</div>
<div class="t" style="position:absolute;top:586.00px;left:1107.95px;transform-origin:0 0;font-size:10.8px;line-height:10.8px;color:#111;white-space:nowrap;transform:scaleX(1.0437);">($64.59)</div>
<div class="t" style="position:absolute;top:586.00px;left:1191.92px;transform-origin:0 0;font-size:10.8px;line-height:10.8px;color:#111;white-space:nowrap;transform:scaleX(1.0323);">$1,173.05</div>
<div class="t" style="position:absolute;top:586.00px;left:1313.93px;transform-origin:0 0;font-size:10.8px;line-height:10.8px;color:#111;white-space:nowrap;transform:scaleX(1.0132);">$0.00</div>
<div style="position:absolute;left:8px;top:666px;width:1374px;height:28px;background:linear-gradient(#dcdcdc,#d0d0d0 50%,#bdbdbd);border:1px solid #5a5a5a;box-sizing:border-box;"></div>
<div style="position:absolute;left:8px;top:694px;width:1374px;height:33px;background:#e8e8e8;"></div>
<div style="position:absolute;left:11px;top:701px;width:19px;height:19px;box-sizing:border-box;border:1px solid #d02828;border-top-color:#c87878;border-bottom-color:#7a5050;background:linear-gradient(#fbd4d4,#f6b0b0 45%,#f4a4a8 50%,#fac8c4);"></div>
<svg style="position:absolute;left:15px;top:705px" width="11" height="11" viewBox="0 0 11 11"><path d="M2.6 2.6 L8.4 8.4 M8.4 2.6 L2.6 8.4" stroke="#000" stroke-width="2.3" stroke-linecap="round"/></svg>
<div style="position:absolute;left:34px;top:703px;width:14px;height:14px;box-sizing:border-box;border:1px solid #2a4a9a;border-radius:2px;background:linear-gradient(#e0eefc,#88b8f0);"></div>
<svg style="position:absolute;left:35px;top:700px" width="14" height="15" viewBox="0 0 14 15"><path d="M2.5 8.5 L5.5 12 L11.5 2" stroke="#101828" stroke-width="1.8" fill="none"/></svg>
<div style="position:absolute;left:52px;top:697px;width:4px;height:26px;box-sizing:border-box;border:1px solid #9a9a9a;border-right:none"></div>
<div style="position:absolute;left:155px;top:697px;width:4px;height:26px;box-sizing:border-box;border:1px solid #9a9a9a;border-left:none"></div>
<div style="position:absolute;left:56px;top:700px;width:49px;height:20px;background:#e8c8a0;"></div>
<div class="t" style="position:absolute;top:705.00px;left:59.53px;transform-origin:0 0;font-size:10.8px;line-height:10.8px;color:#222;white-space:nowrap;transform:scaleX(1.0689);">Inactive</div>
<div style="position:absolute;left:109px;top:709px;width:8px;height:1px;background:#8a8a8a;"></div>
<div style="position:absolute;left:109px;top:712px;width:8px;height:1px;background:#8a8a8a;"></div>
<div style="position:absolute;left:121px;top:700px;width:35px;height:20px;background:#c4d8bc;"></div>
<div class="t" style="position:absolute;top:705.00px;left:125.10px;transform-origin:0 0;font-size:10.8px;line-height:10.8px;color:#222;white-space:nowrap;transform:scaleX(0.9433);">False</div>
<div style="position:absolute;left:1327px;top:701px;width:52px;height:19px;box-sizing:border-box;border:1px solid #34509a;background:linear-gradient(#dcecfc,#b0d4f8 50%,#8cc0f4);"></div>
<div class="t" style="position:absolute;top:705.71px;left:1329.50px;transform-origin:0 0;font-size:10.6px;line-height:10.6px;color:#0a0a20;white-space:nowrap;transform:scaleX(0.9843);">Edit Filter</div>
<div style="position:absolute;left:0px;top:0px;width:1px;height:765px;background:#7a7a7a;"></div>
<div style="position:absolute;left:1389px;top:0px;width:1px;height:765px;background:#7a7a7a;"></div>
<div style="position:absolute;left:0px;top:733px;width:1390px;height:32px;background:linear-gradient(#cacaca,#bdbdbd 40%,#ababab);"></div>
<div style="position:absolute;left:0px;top:733px;width:1390px;height:1px;background:#424242;"></div>
<div style="position:absolute;left:0px;top:734px;width:1390px;height:1px;background:#d4d4d4;"></div>
<div class="t" style="position:absolute;top:744.00px;left:8.30px;transform-origin:0 0;font-size:12.7px;line-height:12.7px;color:#111;white-space:nowrap;transform:scaleX(1.0037);">English (United States)</div>
<div class="t" style="position:absolute;top:744.00px;left:152.20px;transform-origin:0 0;font-size:12.7px;line-height:12.7px;color:#f0501e;white-space:nowrap;transform:scaleX(1.0042);">Client Desktop</div>
<div class="t" style="position:absolute;top:744.00px;left:249.90px;transform-origin:0 0;font-size:12.7px;line-height:12.7px;color:#111;white-space:nowrap;transform:scaleX(1.0056);">User: Michelle (RIMSS\mlemoine)</div>
<div class="t" style="position:absolute;top:744.00px;left:453.96px;transform-origin:0 0;font-size:12.7px;line-height:12.7px;color:#111;white-space:nowrap;transform:scaleX(1.0357);">Role: Administrator</div>
<div class="t" style="position:absolute;top:744.00px;left:580.00px;transform-origin:0 0;font-size:12.7px;line-height:12.7px;color:#111;white-space:nowrap;transform:scaleX(0.9931);">Workstation: RIMSS-ML.RIMSS.local</div>
<div class="t" style="position:absolute;top:744.00px;left:800.00px;transform-origin:0 0;font-size:12.7px;line-height:12.7px;color:#111;white-space:nowrap;transform:scaleX(1.0119);">Server: 0&nbsp; ML RIMSS Equipment Company remote</div>
<div class="t" style="position:absolute;top:744.00px;left:1100.97px;transform-origin:0 0;font-size:12.7px;line-height:12.7px;color:#111;white-space:nowrap;transform:scaleX(1.0268);">Database: WinNetStarApp</div>
<div class="t" style="position:absolute;top:744.00px;left:1265.92px;transform-origin:0 0;font-size:12.7px;line-height:12.7px;color:#111;white-space:nowrap;transform:scaleX(0.9776);">Portal: WCF</div>
<div class="t" style="position:absolute;top:744.00px;left:1345.94px;transform-origin:0 0;font-size:12.7px;line-height:12.7px;color:#111;white-space:nowrap;transform:scaleX(1.0602);">Freedo</div>
<div style="position:absolute;left:144px;top:736px;width:1px;height:26px;background:#4a4a4a;"></div>
<div style="position:absolute;left:241px;top:736px;width:1px;height:26px;background:#4a4a4a;"></div>
<div style="position:absolute;left:447px;top:736px;width:1px;height:26px;background:#4a4a4a;"></div>
<div style="position:absolute;left:572px;top:736px;width:1px;height:26px;background:#4a4a4a;"></div>
<div style="position:absolute;left:792px;top:736px;width:1px;height:26px;background:#4a4a4a;"></div>
<div style="position:absolute;left:1094px;top:736px;width:1px;height:26px;background:#4a4a4a;"></div>
<div style="position:absolute;left:1260px;top:736px;width:1px;height:26px;background:#4a4a4a;"></div>
<div style="position:absolute;left:1339px;top:736px;width:1px;height:26px;background:#4a4a4a;"></div>
</body></html>
